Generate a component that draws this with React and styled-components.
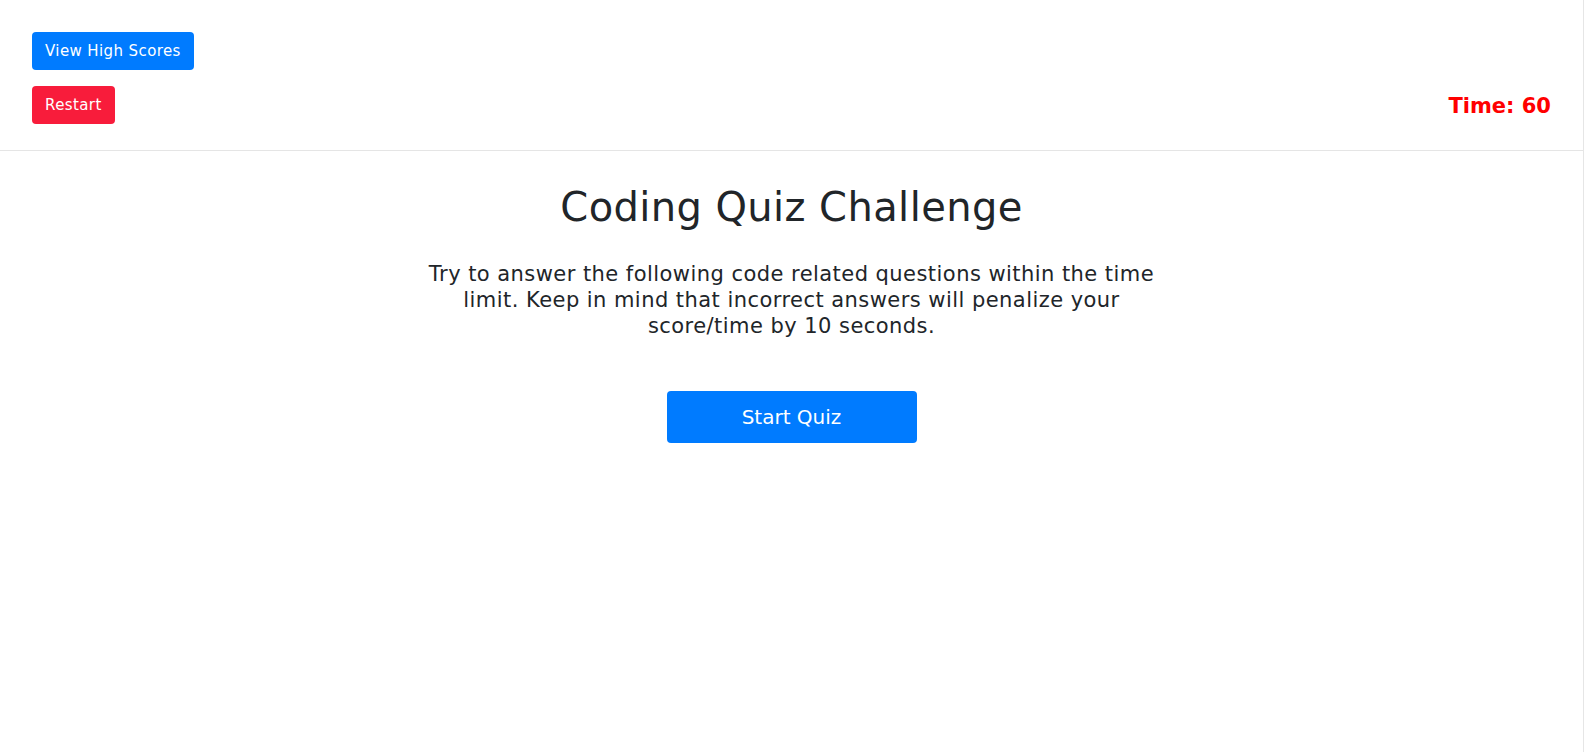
import React from 'react';
import styled, { createGlobalStyle } from 'styled-components';

const GlobalStyle = createGlobalStyle`
  html, body {
    margin: 0;
    padding: 0;
    background: #fff;
  }
  body {
    font-family: 'DejaVu Sans', 'Open Sans', sans-serif;
    color: #212529;
  }
`;

const Page = styled.div`
  min-height: 100vh;
  margin-right: 1px;
  border-right: 1px solid #e6e6e6;
  box-sizing: border-box;
`;

const Header = styled.header`
  display: flex;
  justify-content: space-between;
  align-items: flex-end;
  padding: 32px 32px 26px 32px;
  border-bottom: 1px solid #e5e5e5;
`;

const ButtonStack = styled.div`
  display: flex;
  flex-direction: column;
  align-items: flex-start;
  gap: 16px;
`;

const SmallButton = styled.button`
  height: 38px;
  padding: 0 13px;
  border: none;
  border-radius: 4px;
  font-family: inherit;
  font-size: 15px;
  letter-spacing: 0.4px;
  color: #fff;
  background: ${({ $variant }) => ($variant === 'danger' ? '#f81c3b' : '#007bff')};
  cursor: pointer;
`;

const Timer = styled.div`
  font-size: 21px;
  font-weight: 700;
  color: #ff0000;
  margin-bottom: 6px;
`;

const Main = styled.main`
  display: flex;
  flex-direction: column;
  align-items: center;
  padding-top: 32px;
  text-align: center;
`;

const Title = styled.h1`
  margin: 0;
  font-size: 40px;
  font-weight: 400;
  letter-spacing: 0.4px;
  line-height: 48px;
`;

const Intro = styled.p`
  margin: 30px 0 0;
  width: 745px;
  font-size: 21px;
  letter-spacing: 0.45px;
  line-height: 26px;
`;

const StartButton = styled.button`
  margin-top: 52px;
  width: 250px;
  height: 52px;
  border: none;
  border-radius: 4px;
  background: #007bff;
  color: #fff;
  font-family: inherit;
  font-size: 20px;
  cursor: pointer;
`;

export default function App() {
  return (
    <Page>
      <GlobalStyle />
      <Header>
        <ButtonStack>
          <SmallButton>View High Scores</SmallButton>
          <SmallButton $variant="danger">Restart</SmallButton>
        </ButtonStack>
        <Timer>Time: 60</Timer>
      </Header>
      <Main>
        <Title>Coding Quiz Challenge</Title>
        <Intro>
          Try to answer the following code related questions within the time limit. Keep in mind
          that incorrect answers will penalize your score/time by 10 seconds.
        </Intro>
        <StartButton>Start Quiz</StartButton>
      </Main>
    </Page>
  );
}
